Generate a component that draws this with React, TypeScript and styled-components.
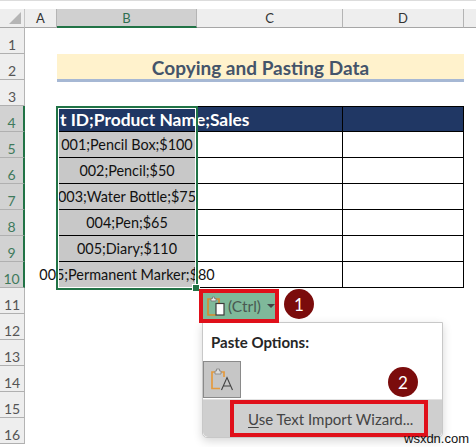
import React from 'react';
import styled, { createGlobalStyle } from 'styled-components';

const GlobalStyle = createGlobalStyle`
  html, body { margin: 0; padding: 0; background: #fff; }
  body { font-family: 'Lato', 'Liberation Sans', sans-serif; overflow: hidden; }
`;

const Page = styled.div`
  position: relative;
  width: 476px;
  height: 447px;
  overflow: hidden;
  background: #fff;
  border-top: 1px solid #dcdcdc;
  padding-top: 8px;
  box-sizing: border-box;
`;

const Sheet = styled.div`
  display: grid;
  grid-template-columns: 25px 32px 140px 146px 121px 12px;
  grid-template-rows: 19px repeat(16, 26px);
`;

const Corner = styled.div`
  background: #eeeeee;
  border-bottom: 1px solid #a6a6a6;
  border-right: 1px solid #c6c6c6;
  box-sizing: border-box;
  display: flex;
  align-items: flex-end;
  justify-content: flex-end;
  padding: 0 3px 3px 0;
`;

const ColHead = styled.div<{ $on?: boolean; $tail?: boolean }>`
  background: ${p => (p.$on ? '#d0d0d0' : '#eeeeee')};
  border-bottom: ${p => (p.$on ? '2px solid #217346' : '1px solid #a6a6a6')};
  border-right: ${p => (p.$tail ? 'none' : '1px solid #b4b4b4')};
  box-sizing: border-box;
  display: flex;
  align-items: center;
  justify-content: center;
  font-size: 13px;
  color: ${p => (p.$on ? '#2f6f50' : '#333')};
`;

const RowHead = styled.div<{ $on?: boolean }>`
  background: ${p => (p.$on ? '#d2d2d2' : '#eeeeee')};
  border-bottom: 1px solid #b0b0b0;
  border-right: ${p => (p.$on ? '2px solid #217346' : '1px solid #b4b4b4')};
  box-sizing: border-box;
  display: flex;
  align-items: center;
  justify-content: center;
  padding-top: 7px;
  font-size: 14px;
  color: ${p => (p.$on ? '#3f7a5c' : '#555')};
`;

const Blank = styled.div``;

const TitleCell = styled.div`
  grid-column: 3 / 6;
  align-self: start;
  height: 28px;
  padding-top: 2px;
  background: #fff2cc;
  border-bottom: 3px solid #a6b8d4;
  box-sizing: border-box;
  display: flex;
  align-items: center;
  justify-content: center;
  font-size: 19px;
  font-weight: 700;
  color: #44546a;
`;

const HeadCell = styled.div<{ $first?: boolean }>`
  background: #203764;
  border-top: 1px solid #000;
  border-bottom: 1px solid #000;
  border-right: 1px solid #000;
  border-left: ${p => (p.$first ? '1px solid #000' : 'none')};
  box-sizing: border-box;
  display: flex;
  align-items: center;
  padding-left: 2px;
  white-space: nowrap;
  font-size: 17.4px;
  font-weight: 700;
  color: #fff;
  position: relative;
  z-index: ${p => (p.$first ? 1 : 0)};
`;

const DataCell = styled.div<{ $spill?: boolean }>`
  background: #c8c8c8;
  border-bottom: 1px solid #000;
  box-sizing: border-box;
  display: flex;
  align-items: center;
  justify-content: center;
  white-space: nowrap;
  font-size: 14.4px;
  color: #111;
  overflow: ${p => (p.$spill ? 'visible' : 'hidden')};
`;

const EmptyCell = styled.div`
  border-bottom: 1px solid #000;
  border-right: 1px solid #000;
  box-sizing: border-box;
`;

const RowTenText = styled.span`
  position: relative;
  z-index: 1;
`;

const Selection = styled.div`
  position: absolute;
  left: 56px;
  top: 105px;
  width: 142px;
  height: 184px;
  box-sizing: border-box;
  border: 2px solid #217346;
  outline: 1px solid #fff;
  outline-offset: -3px;
  z-index: 2;
  pointer-events: none;
`;

const FillHandle = styled.div`
  position: absolute;
  right: -4px;
  bottom: -4px;
  width: 6px;
  height: 6px;
  background: #217346;
  border: 1px solid #fff;
`;

const RedBox = styled.div`
  box-sizing: border-box;
  border: 4px solid #e0101a;
`;

const PasteButton = styled(RedBox)`
  position: absolute;
  left: 199px;
  top: 288px;
  width: 80px;
  height: 34px;
  background: #7fb99a;
  display: flex;
  align-items: center;
  gap: 3px;
  padding-left: 4px;
  font-size: 15.5px;
  color: #4a5a52;
  z-index: 4;
`;

const Caret = styled.span`
  width: 0;
  height: 0;
  margin-left: 3px;
  border-left: 4px solid transparent;
  border-right: 4px solid transparent;
  border-top: 4px solid #444;
`;

const Badge = styled.div<{ $x: number; $y: number }>`
  position: absolute;
  left: ${p => p.$x}px;
  top: ${p => p.$y}px;
  width: 30px;
  height: 30px;
  border-radius: 50%;
  background: #7b0c0c;
  color: #fff;
  font-size: 17px;
  display: flex;
  align-items: center;
  justify-content: center;
  z-index: 5;
`;

const Menu = styled.div`
  position: absolute;
  left: 202px;
  top: 321px;
  width: 241px;
  height: 116px;
  box-sizing: border-box;
  background: #fff;
  border: 1px solid #c8c8c8;
  border-radius: 0 0 5px 5px;
  box-shadow: 0 3px 10px rgba(0, 0, 0, 0.16);
  display: flex;
  flex-direction: column;
  z-index: 3;
`;

const MenuTitle = styled.div`
  font-size: 15px;
  font-weight: 700;
  color: #262626;
  padding: 10px 0 0 8px;
  height: 28px;
`;

const PasteTile = styled.div`
  box-sizing: border-box;
  width: 38px;
  height: 38px;
  background: #c6c6c6;
  border: 1px solid #8a8a8a;
  display: flex;
  align-items: center;
  justify-content: center;
`;

const MenuRow = styled.div`
  margin-top: 1px;
  flex: 1;
  background: #cfcfcf;
  border-top: 1px solid #e2e2e2;
  display: flex;
  align-items: stretch;
  padding-left: 27px;
  border-radius: 0 0 5px 5px;
`;

const WizardBox = styled(RedBox)`
  width: 198px;
  height: 37px;
  display: flex;
  align-items: center;
  padding-left: 14px;
  font-size: 15px;
  color: #444;
  white-space: nowrap;
  u { text-underline-offset: 2px; }
`;

const Watermark = styled.div`
  position: absolute;
  left: 404px;
  top: 430px;
  font-family: 'Liberation Sans', sans-serif;
  font-size: 13px;
  color: #111;
  z-index: 6;
`;

const ClipboardIcon = () => (
  <svg width="18" height="20" viewBox="0 0 18 20" fill="none">
    <path d="M4 3H1V19H9" stroke="#d98a2b" strokeWidth="1.6" />
    <path d="M9 3H12V7" stroke="#d98a2b" strokeWidth="1.6" />
    <path d="M4 5V2.5H5.5V1H7.5V2.5H9V5Z" fill="#e8e8e8" stroke="#7a7a7a" strokeWidth="0.9" />
    <rect x="9" y="7.5" width="8" height="11.5" fill="#fff" stroke="#3c3c3c" strokeWidth="1.2" />
  </svg>
);

const TextPasteIcon = () => (
  <svg width="22" height="23" viewBox="0 0 22 23" fill="none">
    <path d="M4 4H1V20.5H9" stroke="#e49a3e" strokeWidth="1.7" />
    <path d="M10 4H13V9" stroke="#e49a3e" strokeWidth="1.7" />
    <path d="M4 6V3H5.5V1H8.5V3H10V6Z" fill="#dcdcdc" stroke="#8a8a8a" strokeWidth="0.9" />
    <path d="M10.5 22L16 9.5L21.5 22M12.5 18H19.5" stroke="#444" strokeWidth="1.1" />
  </svg>
);

const CornerMark = () => (
  <svg width="12" height="12" viewBox="0 0 12 12">
    <path d="M12 0V12H0Z" fill="#b5b5b5" />
  </svg>
);

const dataRows = ['001;Pencil Box;$100', '002;Pencil;$50', '003;Water Bottle;$75', '004;Pen;$65', '005;Diary;$110'];

export default function App() {
  return (
    <Page>
      <GlobalStyle />
      <Sheet>
        <Corner><CornerMark /></Corner>
        <ColHead>A</ColHead>
        <ColHead $on>B</ColHead>
        <ColHead>C</ColHead>
        <ColHead>D</ColHead>
        <ColHead $tail />

        <RowHead>1</RowHead>
        <Blank /><Blank /><Blank /><Blank /><Blank />

        <RowHead>2</RowHead>
        <Blank />
        <TitleCell>Copying and Pasting Data</TitleCell>
        <Blank />

        <RowHead>3</RowHead>
        <Blank /><Blank /><Blank /><Blank /><Blank />

        <RowHead $on>4</RowHead>
        <Blank />
        <HeadCell $first>t ID;Product Name;Sales</HeadCell>
        <HeadCell />
        <HeadCell />
        <Blank />

        {dataRows.map((text, i) => (
          <React.Fragment key={text}>
            <RowHead $on>{i + 5}</RowHead>
            <Blank />
            <DataCell>{text}</DataCell>
            <EmptyCell />
            <EmptyCell />
            <Blank />
          </React.Fragment>
        ))}

        <RowHead $on>10</RowHead>
        <Blank />
        <DataCell $spill><RowTenText>005;Permanent Marker;$80</RowTenText></DataCell>
        <EmptyCell />
        <EmptyCell />
        <Blank />

        {[11, 12, 13, 14, 15, 16].map(n => (
          <React.Fragment key={n}>
            <RowHead>{n}</RowHead>
            <Blank /><Blank /><Blank /><Blank /><Blank />
          </React.Fragment>
        ))}
      </Sheet>

      <Selection><FillHandle /></Selection>

      <PasteButton>
        <ClipboardIcon />
        (Ctrl)
        <Caret />
      </PasteButton>
      <Badge $x={284} $y={288}>1</Badge>

      <Menu>
        <MenuTitle>Paste Options:</MenuTitle>
        <PasteTile><TextPasteIcon /></PasteTile>
        <MenuRow>
          <WizardBox><span><u>U</u>se Text Import Wizard...</span></WizardBox>
        </MenuRow>
      </Menu>
      <Badge $x={388} $y={366}>2</Badge>
      <Watermark>wsxdn.com</Watermark>
    </Page>
  );
}
